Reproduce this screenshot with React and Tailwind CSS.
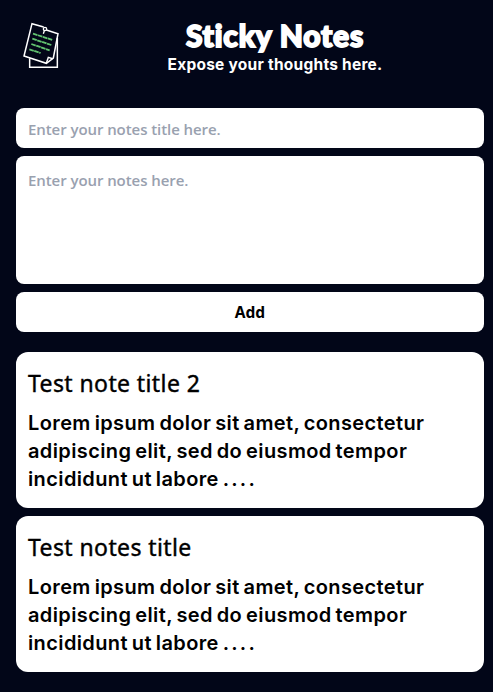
function NotesLogo() {
  return (
    <svg className="h-[50px] w-[42px] shrink-0" viewBox="30 30 126 150" fill="none" stroke="#fff" strokeWidth="4.5">
      <path d="M59 145V172H142V84" />
      <path d="M101 51 66 41 42 138 109 160 130 144 144 71 109 60" />
      <path d="M109 160 115 142 128 146" />
      <circle cx="105" cy="57" r="5" strokeWidth="4" />
      <path d="M103 62 100 71" strokeWidth="4" />
      <path d="M69 71 128 90M67 86 124 105M64 102 119 121M58 118 92 129" stroke="#62c370" strokeWidth="5.5" strokeDasharray="14 1.5" />
    </svg>
  );
}

const notes = [{ title: "Test note title 2" }, { title: "Test notes title" }];

function Note({ title }) {
  return (
    <article className="h-[156px] rounded-xl bg-white px-3 pt-[15px] text-black">
      <h2 className="font-['Noto_Sans',sans-serif] text-[23px] leading-8 tracking-[0.4px] [-webkit-text-stroke:0.4px_black]">
        {title}
      </h2>
      <p className="mt-[10px] flex flex-col items-start font-['Inter',sans-serif] text-xl leading-7 font-semibold tracking-[0.38px] whitespace-nowrap [word-spacing:-1.5px]">
        <span>Lorem ipsum dolor sit amet, consectetur</span>
        <span>adipiscing elit, sed do eiusmod tempor</span>
        <span>
          incididunt ut labore <span className="tracking-[2.2px]">....</span>
        </span>
      </p>
    </article>
  );
}

export default function App() {
  return (
    <div className="h-[692px] w-full overflow-hidden bg-slate-950">
      <main className="w-[500px] px-4">
        <header className="flex h-[108px] pt-5 pl-1">
          <NotesLogo />
          <div className="flex w-[426px] flex-col items-center pt-px pl-1 text-white">
            <h1 className="font-['Lato',sans-serif] text-[30px] leading-7 font-black tracking-[0.8px] [-webkit-text-stroke:1.8px_white]">
              Sticky Notes
            </h1>
            <p className="mt-1 font-['Inter',sans-serif] text-[15.5px] leading-6 font-bold tracking-[0.25px]">
              Expose your thoughts here.
            </p>
          </div>
        </header>
        <form className="flex flex-col gap-2">
          <input
            className="h-10 rounded-lg bg-white px-3 pt-0.5 font-['Open_Sans',sans-serif] text-[15px] font-semibold tracking-[-0.07px] placeholder:text-gray-400"
            placeholder="Enter your notes title here."
          />
          <textarea
            className="h-32 resize-none rounded-lg bg-white px-3 py-3 font-['Open_Sans',sans-serif] text-[15px] leading-6 font-semibold tracking-[-0.07px] placeholder:text-gray-400"
            placeholder="Enter your notes here."
          />
          <button type="button" className="h-10 rounded-lg bg-white pt-0.5 font-['Noto_Sans',sans-serif] text-[15.5px] font-bold text-black">
            Add
          </button>
        </form>
        <section className="mt-5 flex flex-col gap-2">
          {notes.map((note) => (
            <Note key={note.title} title={note.title} />
          ))}
        </section>
      </main>
    </div>
  );
}
